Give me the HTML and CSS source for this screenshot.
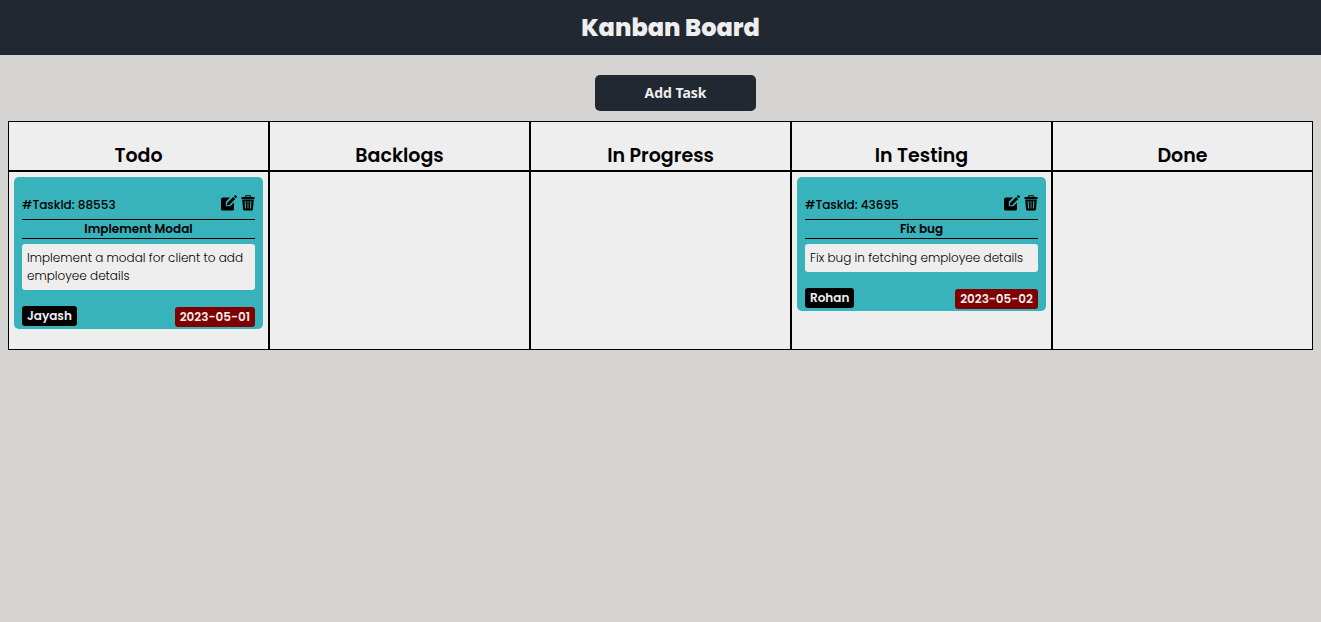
FILE: index.html
```html
<!DOCTYPE html>
<html lang="en">
<head>
<meta charset="utf-8">
<meta name="viewport" content="width=device-width, initial-scale=1">
<title>Kanban Board</title>
<link rel="stylesheet" href="styles.css">
</head>
<body>
<svg class="sprite" aria-hidden="true">
  <symbol id="icon-edit" viewBox="0 0 16 16">
    <path d="M2 2.500H9L4.800 6.700V11.200H9.200L13 7.500V14Q13 15.500 11.500 15.500H1.500Q0 15.500 0 14V4.500Q0 2.500 2 2.500Z"/>
    <path d="M12.200 1.900L14.200 3.900L8.300 9.900L5.700 10.500L6.300 7.800ZM12.900 1.200L14 .2Q14.500 0 15 .4L15.800 1.200Q16.100 1.700 15.700 2.300L14.800 3.200Z"/>
  </symbol>
  <symbol id="icon-trash" viewBox="0 0 14 16">
    <path fill-rule="evenodd" d="M4.500 .3H9.500L10.300 2H13.500V4H.5V2H3.700ZM5.200 1.200L4.900 2H9.100L8.800 1.200ZM1.200 4.600H12.800L12 14.300Q11.900 15.500 10.700 15.500H3.300Q2.100 15.500 2 14.300ZM3.600 6L4.100 13.500H5L4.600 6ZM6.600 6V13.500H7.400V6ZM9.400 6L9 13.500H9.900L10.400 6Z"/>
  </symbol>
</svg>
<header class="topbar"><h1 class="topbar-title">Kanban Board</h1></header>
<main>
  <div class="toolbar"><button class="add-task" type="button">Add Task</button></div>
  <div class="board">
    <section class="column">
      <h2 class="column-title">Todo</h2>
      <div class="column-body">
        <article class="card">
          <div class="card-top">
            <span class="task-id">#TaskId: 88553</span>
            <span class="actions">
              <button class="icon-button" type="button" aria-label="Edit task"><svg class="icon-edit"><use href="#icon-edit"/></svg></button>
              <button class="icon-button" type="button" aria-label="Delete task"><svg class="icon-trash"><use href="#icon-trash"/></svg></button>
            </span>
          </div>
          <h3 class="card-title">Implement Modal</h3>
          <p class="description">Implement a modal for client to add employee details</p>
          <div class="card-bottom"><span class="badge assignee">Jayash</span><time class="badge due">2023-05-01</time></div>
        </article>
      </div>
    </section>
    <section class="column">
      <h2 class="column-title">Backlogs</h2>
      <div class="column-body"></div>
    </section>
    <section class="column">
      <h2 class="column-title">In Progress</h2>
      <div class="column-body"></div>
    </section>
    <section class="column">
      <h2 class="column-title">In Testing</h2>
      <div class="column-body">
        <article class="card">
          <div class="card-top">
            <span class="task-id">#TaskId: 43695</span>
            <span class="actions">
              <button class="icon-button" type="button" aria-label="Edit task"><svg class="icon-edit"><use href="#icon-edit"/></svg></button>
              <button class="icon-button" type="button" aria-label="Delete task"><svg class="icon-trash"><use href="#icon-trash"/></svg></button>
            </span>
          </div>
          <h3 class="card-title">Fix bug</h3>
          <p class="description">Fix bug in fetching employee details</p>
          <div class="card-bottom"><span class="badge assignee">Rohan</span><time class="badge due">2023-05-02</time></div>
        </article>
      </div>
    </section>
    <section class="column">
      <h2 class="column-title">Done</h2>
      <div class="column-body"></div>
    </section>
  </div>
</main>
</body>
</html>
```
FILE: styles.css
```css
* { box-sizing: border-box; }
body {
  margin: 0;
  background: #d5d4d2;
  color: #000;
  font-family: Poppins, Inter, sans-serif;
}
h1, h2, h3, p { margin: 0; }
.sprite { display: none; }
.topbar {
  padding: 10px 0 9px 20px;
  background: #222831;
  color: #eee;
  text-align: center;
}
.topbar-title { font-size: 24px; line-height: 36px; font-weight: 800; }
.toolbar {
  display: flex;
  justify-content: center;
  padding: 20px 0 10px 30px;
}
.add-task {
  padding: 8px 49px;
  border: 0;
  border-radius: 5px;
  background: #222831;
  color: #eee;
  font: 700 14px/20px "Noto Sans", sans-serif;
}
.board {
  display: grid;
  grid-template-columns: repeat(5, minmax(0, 1fr));
  margin: 0 8px;
}
.column { display: flex; flex-direction: column; }
.column-title {
  padding: 20px 0 0;
  border: 1px solid #000;
  background: #eee;
  font-size: 19px;
  line-height: 28px;
  font-weight: 600;
  text-align: center;
}
.column-body {
  flex: 1;
  padding: 5px 5px 20px;
  border: 1px solid #000;
  background: #eee;
}
.card {
  padding: 18px 8px 2px;
  border-radius: 5px;
  background: #39b3bb;
  font-size: 12px;
  line-height: 18px;
  font-weight: 500;
}
.card-top {
  display: flex;
  justify-content: space-between;
  align-items: flex-start;
  padding-bottom: 4px;
}
.task-id { line-height: 20px; }
.actions { display: flex; gap: 4px; }
.icon-button {
  display: flex;
  padding: 0;
  border: 0;
  background: none;
  color: #000;
}
.icon-button svg { height: 16px; }
.icon-edit { width: 16px; }
.icon-trash { width: 14px; }
.card-title {
  border: solid #000;
  border-width: 1px 0;
  font-size: 12px;
  line-height: 18px;
  font-weight: 600;
  text-align: center;
}
.description {
  margin-top: 5px;
  padding: 5px;
  border-radius: 3px;
  background: #eee;
  font-weight: 300;
}
.card-bottom {
  display: flex;
  justify-content: space-between;
  min-height: 21px;
  margin-top: 16px;
}
.badge {
  padding: 1px 5px;
  border-radius: 3px;
  color: #eee;
  font-weight: 600;
}
.assignee { align-self: flex-start; background: #000; }
.due { align-self: flex-end; background: #800000; }
```
